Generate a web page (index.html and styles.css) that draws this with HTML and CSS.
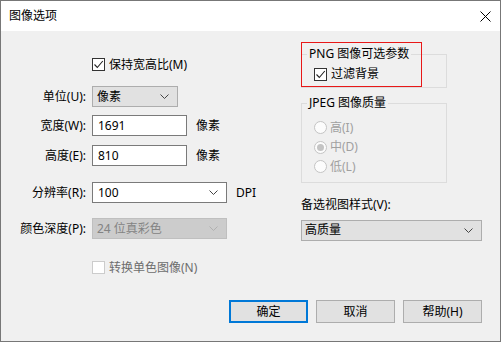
FILE: index.html
```html
<!DOCTYPE html>
<html lang="zh-CN">
<head>
	<meta charset="UTF-8">
	<title>图像选项</title>
	<link rel="stylesheet" href="styles.css">
</head>
<body>

	<div class="dialog">
		<div class="titlebar">
			<span class="title">图像选项</span>
			<svg class="close" width="11" height="11" viewBox="0 0 11 11"><path d="M0.5 0.5 L10.5 10.5 M10.5 0.5 L0.5 10.5" stroke="#000" stroke-width="1" fill="none"/></svg>
		</div>

		<div class="content">
			<div class="main">

				<div class="left">
					<div class="row r-keep">
						<span></span>
						<label class="check">
							<span class="box"><svg width="11" height="11" viewBox="0 0 11 11"><path d="M1.5 5.5 L4.3 8.5 L9.8 2" stroke="#222" stroke-width="1.1" fill="none"/></svg></span>
							保持宽高比(M)
						</label>
					</div>
					<div class="row r-unit">
						<span class="lbl">单位(U):</span>
						<div class="select btn-face unit">像素<svg class="chev" width="9" height="5" viewBox="0 0 9 5"><path d="M0.5 0.5 L4.5 4.5 L8.5 0.5" stroke="#444" fill="none"/></svg></div>
					</div>
					<div class="row r-width">
						<span class="lbl">宽度(W):</span>
						<div class="input">1691</div>
						<span class="suffix">像素</span>
					</div>
					<div class="row r-height">
						<span class="lbl">高度(E):</span>
						<div class="input">810</div>
						<span class="suffix">像素</span>
					</div>
					<div class="row r-res">
						<span class="lbl">分辨率(R):</span>
						<div class="select combo">100<svg class="chev" width="9" height="5" viewBox="0 0 9 5"><path d="M0.5 0.5 L4.5 4.5 L8.5 0.5" stroke="#444" fill="none"/></svg></div>
						<span class="suffix">DPI</span>
					</div>
					<div class="row r-depth">
						<span class="lbl">颜色深度(P):</span>
						<div class="select combo disabled">24 位真彩色<svg class="chev" width="9" height="5" viewBox="0 0 9 5"><path d="M0.5 0.5 L4.5 4.5 L8.5 0.5" stroke="#b0b0b0" fill="none"/></svg></div>
					</div>
					<div class="row r-mono">
						<span></span>
						<label class="check off">
							<span class="box"></span>
							转换单色图像(N)
						</label>
					</div>
				</div>

				<div class="right">
					<div class="group-wrap">
						<fieldset class="group png">
							<legend>PNG 图像可选参数</legend>
							<label class="check">
								<span class="box"><svg width="11" height="11" viewBox="0 0 11 11"><path d="M1.5 5.5 L4.3 8.5 L9.8 2" stroke="#222" stroke-width="1.1" fill="none"/></svg></span>
								过滤背景
							</label>
						</fieldset>
						<div class="mark"></div>
					</div>

					<fieldset class="group jpeg">
						<legend>JPEG 图像质量</legend>
						<label class="radio"><span class="dot"></span>高(I)</label>
						<label class="radio"><span class="dot on"></span>中(D)</label>
						<label class="radio"><span class="dot"></span>低(L)</label>
					</fieldset>

					<div class="view-lbl">备选视图样式(V):</div>
					<div class="select btn-face view">高质量<svg class="chev" width="9" height="5" viewBox="0 0 9 5"><path d="M0.5 0.5 L4.5 4.5 L8.5 0.5" stroke="#444" fill="none"/></svg></div>
				</div>

			</div>

			<div class="buttons">
				<button class="default">确定</button>
				<button>取消</button>
				<button>帮助(H)</button>
			</div>
		</div>
	</div>

</body>
</html>
```

FILE: styles.css
```css
* { box-sizing: border-box }
html, body { margin: 0; padding: 0 }
body {
	font-family: "Noto Sans", "Noto Sans CJK SC", sans-serif;
	font-size: 12px;
	line-height: 16px;
	color: #000;
	background: #f0f0f0;
}
.dialog {
	width: 501px;
	height: 342px;
	border: 1px solid #777;
	background: #f0f0f0;
	display: flex;
	flex-direction: column;
}
.titlebar {
	height: 30px;
	background: #fff;
	display: flex;
	align-items: center;
	justify-content: space-between;
	padding: 0 9px 0 8px;
}
.title { font-size: 12px }
.close { display: block }

.content { flex: 1 }
.main {
	height: 269px;
	display: flex;
}
.left {
	width: 300px;
	padding-top: 23px;
}
.row {
	display: grid;
	grid-template-columns: 85px auto auto;
	justify-content: start;
	align-items: center;
	column-gap: 6px;
	height: 21px;
}
.lbl { text-align: right; white-space: nowrap }
.suffix { margin-left: 3px }
.r-unit { margin-top: 11px }
.r-width { margin-top: 8px }
.r-height { margin-top: 9px }
.r-res { margin-top: 16px }
.r-depth { margin-top: 15px }
.r-mono { margin-top: 18px }

.check {
	display: flex;
	align-items: center;
	gap: 4px;
	white-space: nowrap;
}
.check .box {
	width: 13px;
	height: 13px;
	border: 1px solid #333;
	background: #fff;
	display: flex;
	align-items: center;
	justify-content: center;
}
.check .box svg { display: block }
.check.off { color: #6d6d6d }
.check.off .box { border-color: #ccc }

.input {
	width: 95px;
	height: 21px;
	border: 1px solid #7a7a7a;
	background: #fff;
	padding: 0 5px;
	display: flex;
	align-items: center;
}
.select {
	height: 21px;
	display: flex;
	align-items: center;
	justify-content: space-between;
	padding: 0 8px 0 4px;
	white-space: nowrap;
}
.btn-face {
	background: #e1e1e1;
	border: 1px solid #adadad;
}
.unit { width: 86px }
.combo {
	width: 135px;
	background: #fff;
	border: 1px solid #7a7a7a;
	padding-left: 5px;
}
.combo.disabled {
	background: #cccccc;
	border-color: #bfbfbf;
	color: #838383;
	padding-left: 4px;
}

.right {
	width: 181px;
	padding-top: 15px;
}
.group-wrap { position: relative }
.group {
	width: 146px;
	margin: 0;
	border: 1px solid #dcdcdc;
	padding: 0 0 0 5px;
}
.group legend { padding: 0 2px }
.png { padding-top: 4px; padding-bottom: 5px }
.png .check { margin-left: 7px }
.mark {
	position: absolute;
	left: 0;
	top: -4px;
	width: 121px;
	height: 45px;
	border: 1px solid #e81818;
}

.jpeg {
	margin-top: 7px;
	padding-top: 7px;
	padding-bottom: 5px;
}
.radio {
	display: flex;
	align-items: center;
	gap: 3px;
	height: 19.5px;
	margin-left: 7px;
	color: #a0a0a0;
}
.radio .dot {
	width: 13px;
	height: 13px;
	border-radius: 50%;
	border: 1px solid #c4c4c4;
	background: #fcfcfc;
	display: flex;
	align-items: center;
	justify-content: center;
}
.radio .dot.on::after {
	content: "";
	width: 7px;
	height: 7px;
	border-radius: 50%;
	background: #c4c4c4;
}

.view-lbl { margin-top: 14px }
.view {
	width: 181px;
	margin-top: 7px;
	padding-left: 3px;
}

.buttons {
	display: flex;
	justify-content: flex-end;
	gap: 8px;
	padding-right: 18px;
}
.buttons button {
	width: 79px;
	height: 23px;
	font: inherit;
	color: #000;
	background: #e1e1e1;
	border: 1px solid #adadad;
	padding: 0;
}
.buttons .default { border: 2px solid #0078d7 }
```
